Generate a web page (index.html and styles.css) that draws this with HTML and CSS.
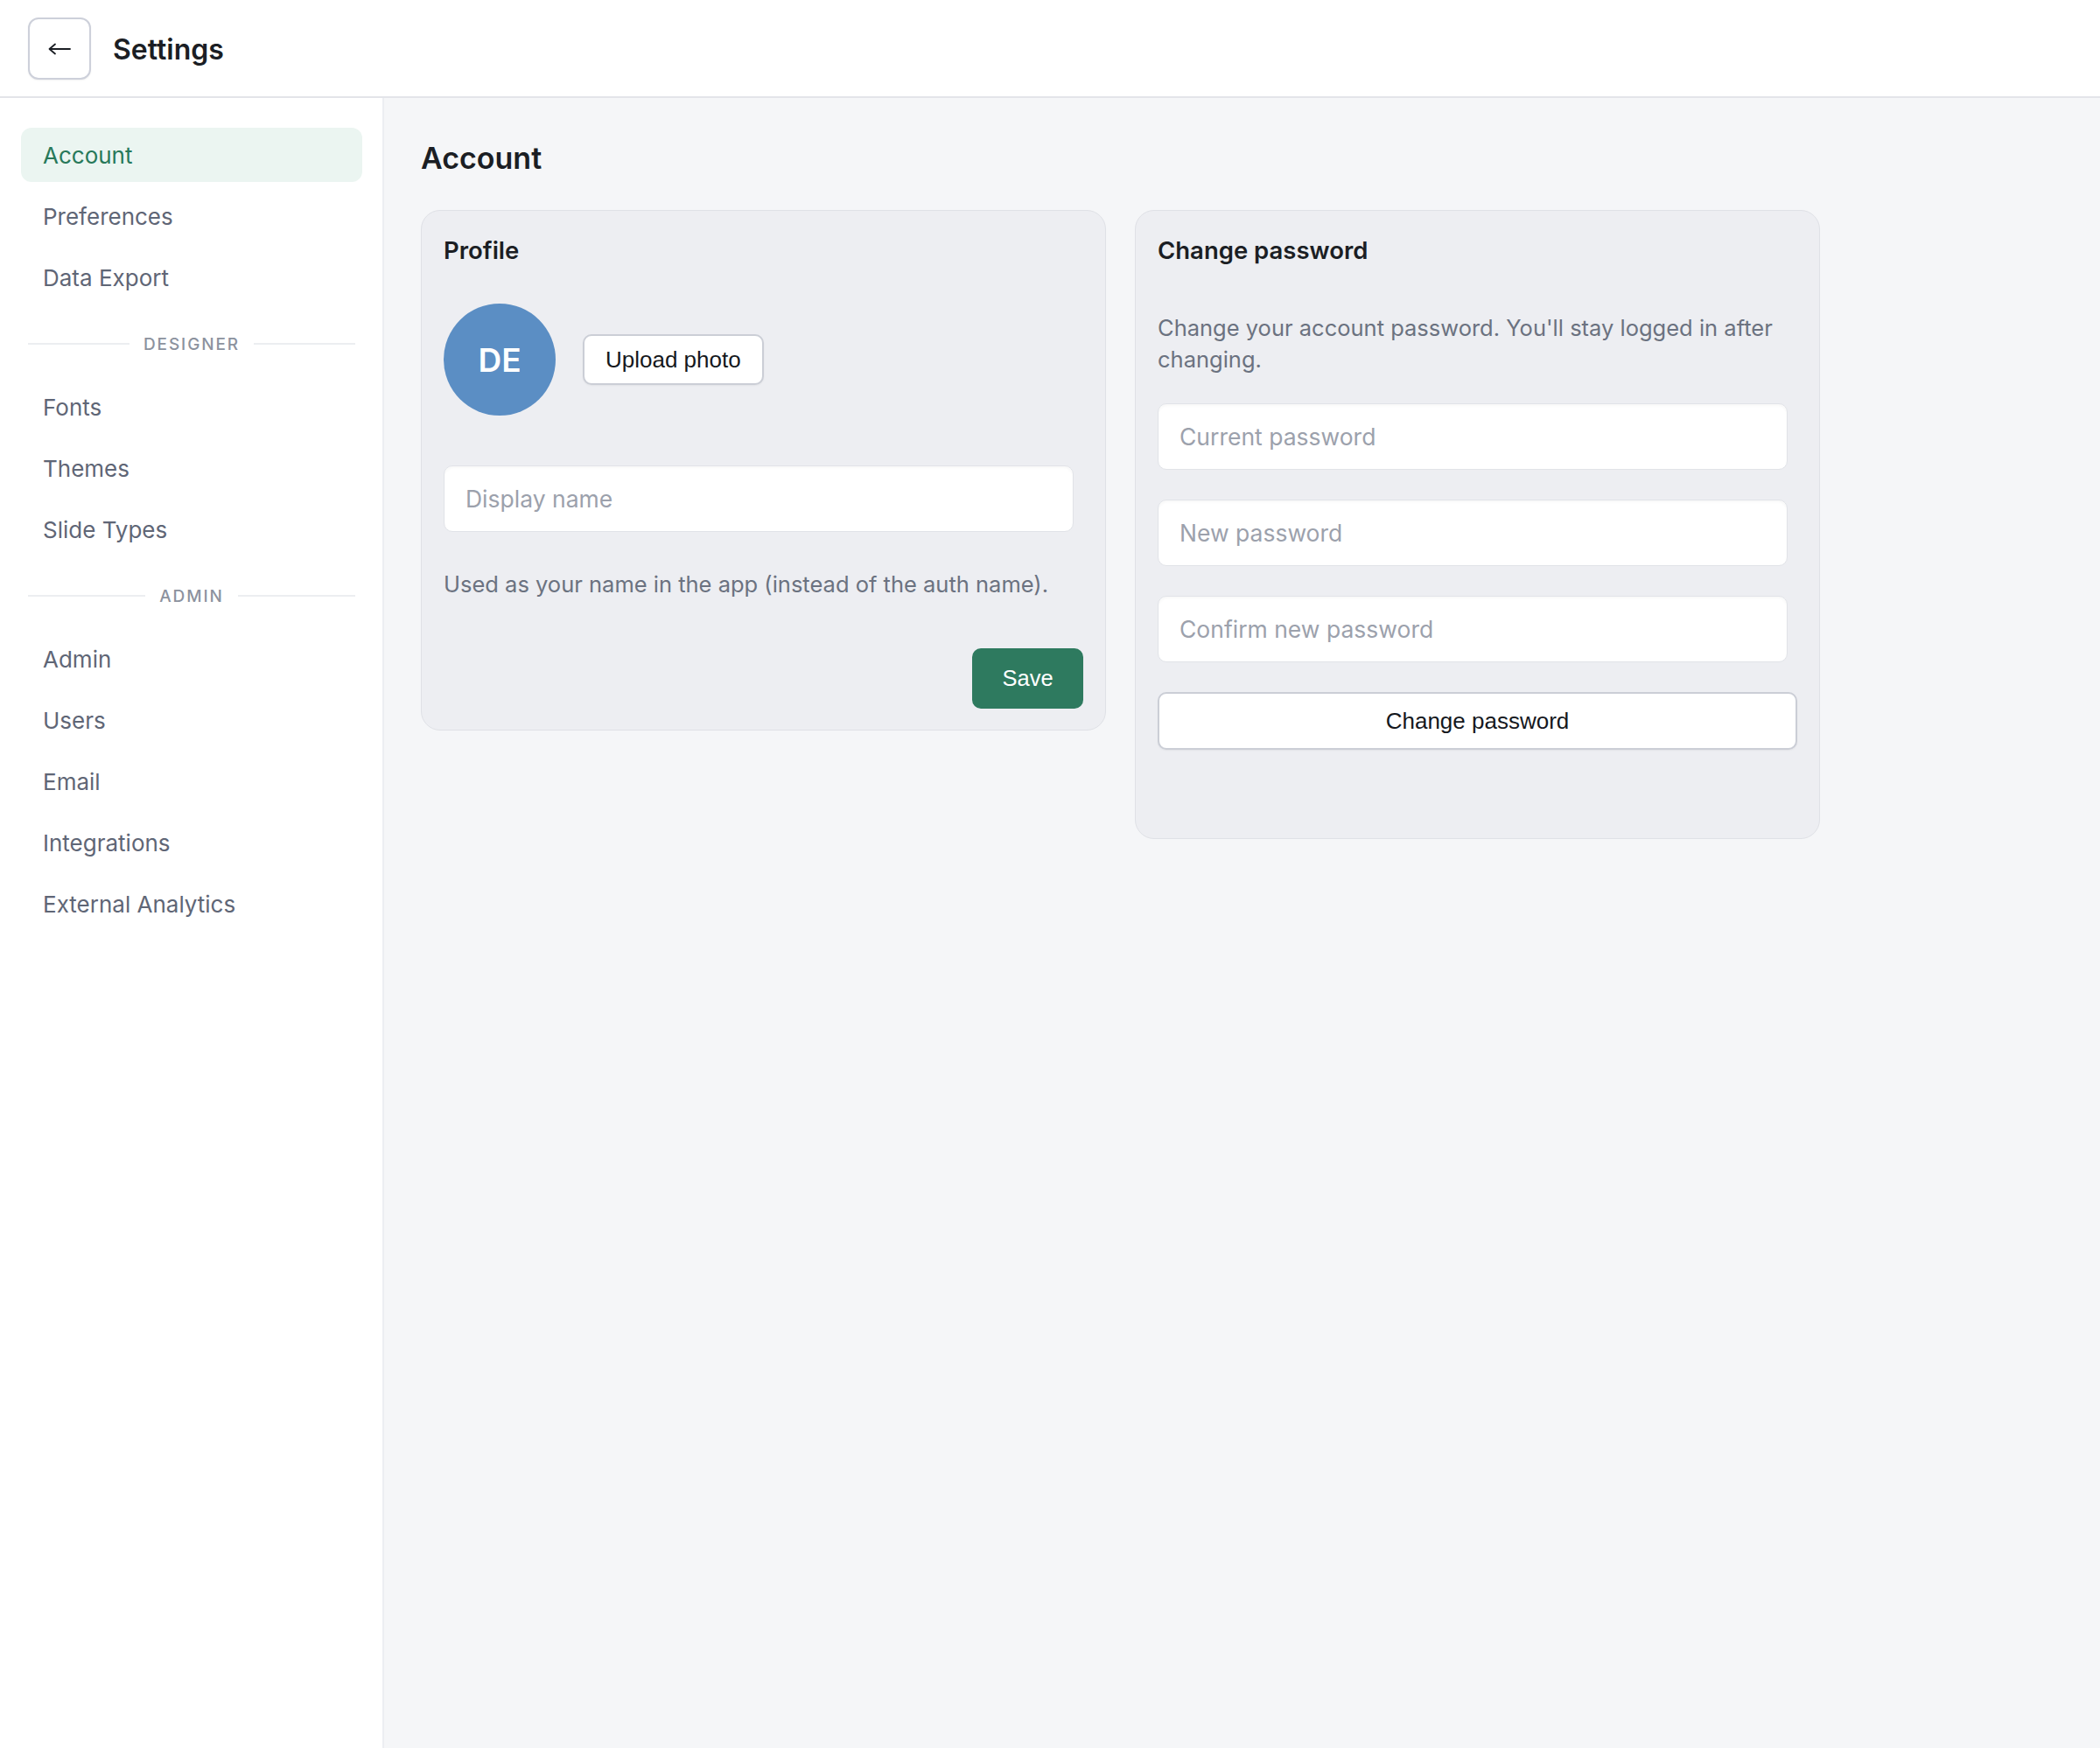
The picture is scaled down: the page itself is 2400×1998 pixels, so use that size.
FILE: index.html
```html
<!DOCTYPE html>
<html lang="en">
<head>
    <meta charset="UTF-8">
    <meta name="viewport" content="width=device-width, initial-scale=1.0">
    <title>Settings</title>
    <link rel="stylesheet" href="styles.css">
</head>
<body>
    <header class="topbar">
        <button class="back-btn" type="button" aria-label="Back">
            <svg width="26" height="14" viewBox="0 0 26 14" fill="none" stroke="#1b1e24" stroke-width="1.8" stroke-linecap="round" stroke-linejoin="round">
                <path d="M25 7H2"/>
                <path d="M8 1.5L1.5 7L8 12.5"/>
            </svg>
        </button>
        <h1 class="page-title">Settings</h1>
    </header>

    <div class="layout">
        <nav class="sidebar">
            <a href="#" class="nav-item active">Account</a>
            <a href="#" class="nav-item">Preferences</a>
            <a href="#" class="nav-item">Data Export</a>

            <div class="nav-section"><span>Designer</span></div>
            <a href="#" class="nav-item">Fonts</a>
            <a href="#" class="nav-item">Themes</a>
            <a href="#" class="nav-item">Slide Types</a>

            <div class="nav-section"><span>Admin</span></div>
            <a href="#" class="nav-item">Admin</a>
            <a href="#" class="nav-item">Users</a>
            <a href="#" class="nav-item">Email</a>
            <a href="#" class="nav-item">Integrations</a>
            <a href="#" class="nav-item">External Analytics</a>
        </nav>

        <main class="content">
            <h2 class="section-title">Account</h2>

            <div class="cards">
                <section class="card">
                    <h3 class="card-title">Profile</h3>

                    <div class="avatar-row">
                        <div class="avatar">DE</div>
                        <button type="button" class="btn btn-outline">Upload photo</button>
                    </div>

                    <input type="text" class="field field-name" placeholder="Display name">
                    <p class="hint hint-name">Used as your name in the app (instead of the auth name).</p>

                    <div class="card-actions">
                        <button type="button" class="btn btn-primary">Save</button>
                    </div>
                </section>

                <section class="card">
                    <h3 class="card-title">Change password</h3>
                    <p class="hint hint-password">Change your account password. You'll stay logged in after changing.</p>

                    <form class="password-form">
                        <input type="password" class="field" placeholder="Current password">
                        <input type="password" class="field" placeholder="New password">
                        <input type="password" class="field" placeholder="Confirm new password">
                        <button type="button" class="btn btn-outline btn-block">Change password</button>
                    </form>
                    <div class="form-status"></div>
                </section>
            </div>
        </main>
    </div>
</body>
</html>
```

FILE: styles.css
```css
* {
    box-sizing: border-box;
}
body {
    margin: 0;
    font-family: Inter, "Noto Sans", Arial, sans-serif;
    font-size: 25px;
    color: #1b1e24;
    background-color: #f5f6f8;
}
.topbar {
    height: 112px;
    display: flex;
    align-items: center;
    gap: 25px;
    padding: 0 32px;
    background: white;
    border-bottom: 2px solid #e3e4e9;
}
.back-btn {
    width: 72px;
    height: 71px;
    margin-top: 1px;
    border: 2px solid #cdd0da;
    border-radius: 12px;
    background: white;
    padding: 0;
    display: flex;
    align-items: center;
    justify-content: center;
    box-shadow: 0 1px 2px rgba(0,0,0,0.06);
}
.page-title {
    margin: 3px 0 0;
    font-size: 32px;
    font-weight: 600;
    color: #1b1e24;
}
.layout {
    display: flex;
    min-height: calc(100vh - 112px);
}
.sidebar {
    width: 439px;
    flex-shrink: 0;
    background: white;
    border-right: 2px solid #eceef2;
    padding: 34px 23px 0 24px;
    display: flex;
    flex-direction: column;
}
.nav-item {
    display: flex;
    align-items: center;
    height: 62px;
    padding: 0 25px;
    margin-bottom: 8px;
    border-radius: 12px;
    color: #5f6676;
    text-decoration: none;
    font-size: 26px;
}
.nav-item.active {
    background-color: #ebf5f1;
    color: #28795a;
}
.nav-section {
    display: flex;
    align-items: center;
    gap: 16px;
    height: 74px;
    margin: 0 8px 4px;
    color: #8c929e;
    font-size: 19px;
    font-weight: 500;
    letter-spacing: 0.1em;
    text-transform: uppercase;
}
.nav-section::before,
.nav-section::after {
    content: "";
    flex: 1;
    height: 2px;
    background: #eceef1;
}
.content {
    flex: 1;
    padding: 48px 42px;
}
.section-title {
    margin: 0 0 38px;
    font-size: 34px;
    font-weight: 600;
    line-height: 42px;
    color: #1b1e24;
}
.cards {
    display: grid;
    grid-template-columns: 1fr 1fr;
    gap: 33px;
    max-width: 1599px;
    align-items: start;
}
.card {
    background-color: #edeef2;
    border: 1.5px solid #dfe1e6;
    border-radius: 22px;
    padding: 30px 25px 24px;
}
.card-title {
    margin: 0;
    font-size: 27.5px;
    line-height: 31px;
    font-weight: 600;
    color: #1b1e24;
}
.avatar-row {
    display: flex;
    align-items: center;
    gap: 31px;
    margin-top: 45px;
}
.avatar {
    width: 128px;
    height: 128px;
    border-radius: 50%;
    background-color: #5b8ec4;
    color: white;
    display: flex;
    align-items: center;
    justify-content: center;
    font-size: 37px;
    font-weight: 600;
}
.btn {
    font-family: "Liberation Sans", Arial, sans-serif;
    font-size: 26px;
    border-radius: 10px;
    cursor: pointer;
}
.btn-outline {
    height: 58px;
    padding: 0 24px;
    background: white;
    color: #15181d;
    border: 2px solid #cbced6;
    box-shadow: 0 1px 2px rgba(0,0,0,0.05);
}
.btn-primary {
    width: 127px;
    height: 69px;
    font-size: 25.5px;
    background-color: #2e7a5f;
    color: white;
    border: none;
}
.btn-block {
    width: 100%;
    height: 66px;
}
.field {
    display: block;
    width: calc(100% - 11px);
    height: 76px;
    padding: 0 24px;
    background: white;
    border: 1.5px solid #e1e3e8;
    border-radius: 10px;
    font-family: inherit;
    font-size: 26.5px;
    color: #1b1e24;
    box-shadow: inset 0 2px 3px rgba(0,0,0,0.03);
}
.field::placeholder {
    color: #9ca1ac;
}
.field-name {
    margin-top: 57px;
}
.hint {
    margin: 0;
    font-size: 25.5px;
    line-height: 36px;
    color: #6b7280;
}
.hint-name {
    margin-top: 42px;
}
.hint-password {
    margin-top: 55px;
}
.card-actions {
    display: flex;
    justify-content: flex-end;
    margin-top: 55px;
}
.password-form {
    display: flex;
    flex-direction: column;
    gap: 34px;
    margin: 32px 0 0;
}
.form-status {
    height: 77px;
}
```
